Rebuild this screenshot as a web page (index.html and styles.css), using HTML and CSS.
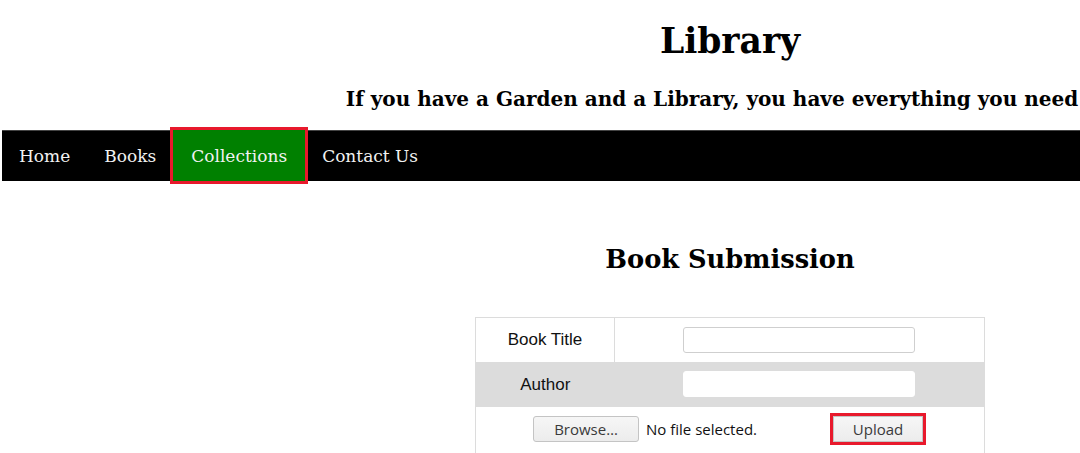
FILE: index.html
```html
<!DOCTYPE html>
<html>
<head>
<meta charset="utf-8">
<link rel="stylesheet" href="styles.css">
</head>
<body>
<div class="page">
  <header class="header">
    <h1 class="title">Library</h1>
    <h3 class="tagline">If you have a Garden and a Library, you have everything you need</h3>
  </header>
  <nav class="nav">
    <a class="nav-item">Home</a>
    <a class="nav-item">Books</a>
    <a class="nav-item active">Collections</a>
    <a class="nav-item">Contact Us</a>
  </nav>
  <main class="main">
    <h2 class="section-title">Book Submission</h2>
    <table class="form-table">
      <tr class="row">
        <td class="label divider">Book Title</td>
        <td class="field"><span class="text-input"></span></td>
      </tr>
      <tr class="row shaded">
        <td class="label">Author</td>
        <td class="field"><span class="text-input"></span></td>
      </tr>
      <tr class="row">
        <td class="upload-cell" colspan="2">
          <div class="upload-line">
            <span class="btn browse">Browse…</span>
            <span class="file-status">No file selected.</span>
            <span class="btn upload">Upload</span>
          </div>
        </td>
      </tr>
    </table>
  </main>
</div>
</body>
</html>
```

FILE: styles.css
```css
html, body {
  margin: 0;
  padding: 0;
  background: #fff;
  overflow: hidden;
}
body {
  width: 1080px;
  height: 453px;
}
.page {
  width: 1456px;
  margin-left: 2px;
  font-family: "DejaVu Serif", serif;
}
.header {
  text-align: center;
  padding-top: 20px;
}
.title {
  margin: 0;
  font-size: 34.5px;
  line-height: 42px;
  font-weight: bold;
  color: #000;
}
.tagline {
  margin: 0;
  margin-top: 24px;
  margin-right: 36px;
  font-size: 20px;
  line-height: 26px;
  font-weight: bold;
  color: #000;
  white-space: nowrap;
}
.nav {
  margin-top: 18px;
  height: 50px;
  background: #000;
  border-top: 1px solid #444;
  display: flex;
  align-items: stretch;
}
.nav-item {
  display: flex;
  align-items: center;
  padding: 0 17px;
  font-size: 17px;
  color: #f2f2f2;
}
.nav-item.active {
  background: #008000;
  outline: 3px solid #e8192c;
  outline-offset: 0;
  margin-top: -1px;
  height: 51px;
  box-sizing: border-box;
  padding: 0 18px 0 18px;
}
.main {
  display: flex;
  flex-direction: column;
  align-items: center;
}
.section-title {
  margin: 0;
  margin-top: 62px;
  font-size: 25.7px;
  line-height: 32px;
  font-weight: bold;
  color: #000;
}
.form-table {
  margin-top: 42px;
  width: 510px;
  border-collapse: collapse;
  border: 1px solid #dcdcdc;
  font-family: "Liberation Sans", Arial, sans-serif;
  font-size: 17px;
  color: #111;
}
.row td {
  padding: 0;
}
.row:first-child td { height: 44px; }
.row.shaded td { height: 45px; background: #dcdcdc; }
.row:last-child td { height: 46px; }
.label {
  width: 138px;
  text-align: center;
}
.divider {
  border-right: 1px solid #dcdcdc;
}
.field {
  text-align: center;
}
.text-input {
  display: inline-block;
  vertical-align: middle;
  width: 230px;
  height: 24px;
  background: #fff;
  border: 1px solid #cfcfcf;
  border-radius: 3px;
  margin-right: 1px;
  margin-top: -1px;
}
.shaded .text-input {
  border-color: #fff;
}
.upload-cell {
  text-align: center;
  vertical-align: top;
  padding-top: 9px !important;
}
.upload-line {
  display: flex;
  align-items: center;
  justify-content: center;
  font-family: "Open Sans", "Noto Sans", sans-serif;
  font-size: 15px;
  color: #111;
  padding-right: 4px;
}
.btn {
  display: inline-flex;
  align-items: center;
  justify-content: center;
  height: 26px;
  box-sizing: border-box;
  border: 1px solid #c4c4c4;
  border-radius: 3px;
  background: linear-gradient(#f6f6f6, #ececec);
  color: #3a3a3a;
  font-size: 15px;
}
.browse {
  width: 106px;
}
.file-status {
  margin-left: 7px;
  width: 187px;
  text-align: left;
}
.upload {
  width: 90px;
  outline: 3px solid #e8192c;
  outline-offset: 0;
  border-radius: 0;
}
```
